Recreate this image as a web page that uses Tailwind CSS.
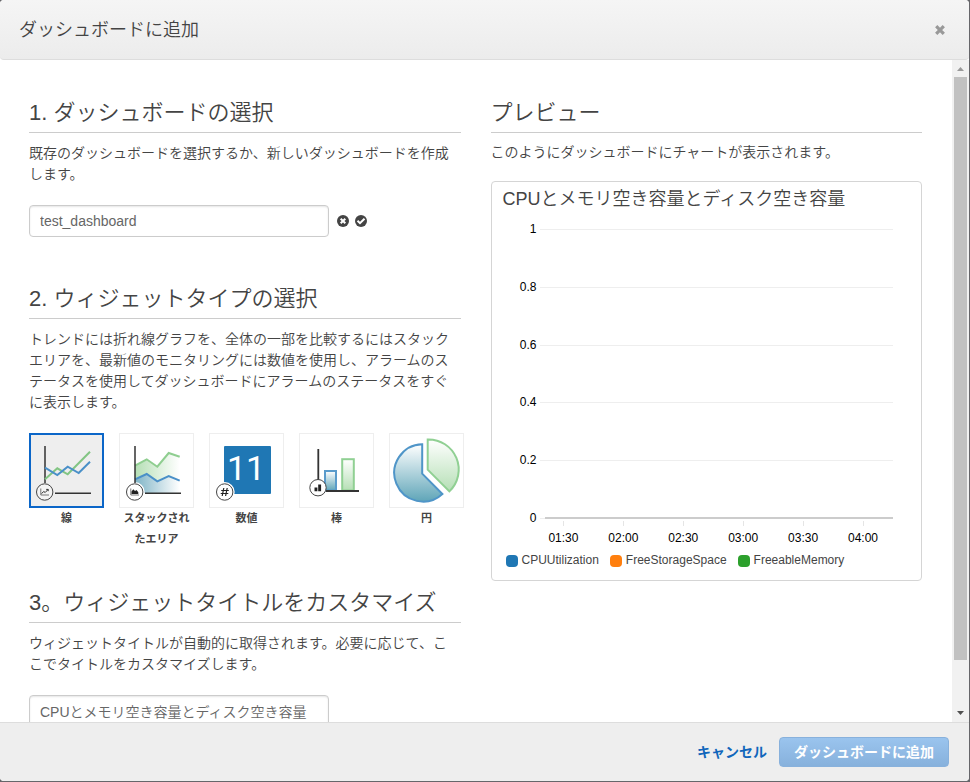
<!DOCTYPE html>
<html lang="ja">
<head>
<meta charset="utf-8">
<title>ダッシュボードに追加</title>
<script src="https://cdn.jsdelivr.net/npm/@tailwindcss/browser@4"></script>
</head>
<body class="bg-[#66666a] font-['Liberation_Sans','Noto_Sans_CJK_JP',sans-serif] text-[#444] text-[14px] leading-[21px] font-[350]">
<div class="h-screen pr-px pb-px">
<div role="dialog" aria-labelledby="dialog-title" class="flex h-full flex-col overflow-hidden rounded-[4px] bg-white">

  <header class="flex h-[60px] shrink-0 items-center justify-between rounded-b-[4px] border-b border-[#ddd] bg-linear-to-b from-[#f5f5f5] to-[#ececec] pl-[19px] pr-[24px]">
    <h1 id="dialog-title" class="text-[18px] leading-[24px] font-[350]">ダッシュボードに追加</h1>
    <button type="button" aria-label="閉じる" class="block">
      <svg class="block size-[10px]" viewBox="0 0 10 10"><path d="M1.2 1.2 8.8 8.8M8.8 1.2 1.2 8.8" stroke="#999" stroke-width="3.2" fill="none"/></svg>
    </button>
  </header>

  <div class="flex min-h-0 flex-1">
    <main class="grid min-w-0 flex-1 grid-cols-2 content-start gap-[30px] overflow-hidden pt-[37px] pr-[30px] pl-[29px]">
      <div class="min-w-0">
        <section>
          <h2 class="border-b border-[#ccc] pb-[3px] text-[22px] leading-[32px] font-[350]">1. ダッシュボードの選択</h2>
          <p class="mt-[10px]">既存のダッシュボードを選択するか、新しいダッシュボードを作成します。</p>
          <div class="mt-[20px] flex items-center">
            <input type="text" aria-label="ダッシュボード名" value="test_dashboard" class="h-[32px] w-[300px] rounded-[4px] border border-[#ccc] px-[10px] text-[#666] shadow-[inset_0_1px_2px_rgba(0,0,0,0.1)]">
            <button type="button" aria-label="取り消す" class="ml-[8px]">
              <svg class="block size-[12px]" viewBox="0 0 12 12"><circle cx="6" cy="6" r="6" fill="#444"/><path d="M3.7 3.7 8.3 8.3M8.3 3.7 3.7 8.3" stroke="#fff" stroke-width="2"/></svg>
            </button>
            <button type="button" aria-label="確定する" class="ml-[6px]">
              <svg class="block size-[12px]" viewBox="0 0 12 12"><circle cx="6" cy="6" r="6" fill="#444"/><path d="M2.5 5.8 5 8.2 9.5 3.8" stroke="#fff" stroke-width="2" fill="none"/></svg>
            </button>
          </div>
        </section>

        <section class="mt-[46px]">
          <h2 class="border-b border-[#ccc] pb-[3px] text-[22px] leading-[32px] font-[350]">2. ウィジェットタイプの選択</h2>
          <p class="mt-[10px]">トレンドには折れ線グラフを、全体の一部を比較するにはスタックエリアを、最新値のモニタリングには数値を使用し、アラームのステータスを使用してダッシュボードにアラームのステータスをすぐに表示します。</p>
          <div class="mt-[20px] flex gap-[15px] text-center text-[11px] font-bold">
            <label class="relative w-[75px] shrink-0">
              <input type="radio" name="widget" checked class="peer sr-only">
              <span class="block h-[75px] overflow-hidden border-2 border-[#0b66c8] bg-[#eee]">
                <svg class="block h-[71px] w-[71px]" viewBox="2 2 71 71" fill="none">
                  <path d="M16 13V50M26 60.3H62" stroke="#333" stroke-width="1.5"/>
                  <path d="M16 46.3 28.3 35.3 38.7 41.3 61 18.7" stroke="#82c583" stroke-width="2"/>
                  <path d="M16 34.7 28.3 42 38.7 33.7 49.7 40 61 28.7" stroke="#4a90c8" stroke-width="2"/>
                  <circle cx="15.7" cy="59" r="8.2" fill="#f4f4f4" stroke="#444" stroke-width="1"/>
                  <path d="M11.8 55.5V62H20" stroke="#555" stroke-width=".8"/>
                  <path d="M12.5 60.5 14.8 58.5 16.2 59.5 19 56.5M17.2 56.4H19.2V58.2" stroke="#333" stroke-width="1"/>
                </svg>
              </span>
              線
            </label>
            <label class="relative w-[75px] shrink-0">
              <input type="radio" name="widget" class="peer sr-only">
              <span class="block h-[75px] overflow-hidden border border-[#eee]">
                <svg class="block h-[73px] w-[73px]" viewBox="1 1 73 73" fill="none">
                  <defs>
                    <linearGradient id="area-green"><stop offset="0" stop-color="#b5dfb5"/><stop offset="1" stop-color="#fff"/></linearGradient>
                    <linearGradient id="area-blue"><stop offset="0" stop-color="#7fb4c6"/><stop offset="1" stop-color="#fff"/></linearGradient>
                  </defs>
                  <path d="M16 32.7 27.7 26.3 38.3 33.7 49.7 20 60.7 23.7V60H16Z" fill="url(#area-green)"/>
                  <path d="M16 46.3 27.7 41 38.3 48.3 49.7 43 60.7 47.7V60H16Z" fill="url(#area-blue)"/>
                  <path d="M16 32.7 27.7 26.3 38.3 33.7 49.7 20 60.7 23.7" stroke="#8fce90" stroke-width="2"/>
                  <path d="M16 46.3 27.7 41 38.3 48.3 49.7 43 60.7 47.7" stroke="#4a90c8" stroke-width="2"/>
                  <circle cx="15.7" cy="59" r="10" fill="#fff"/>
                  <path d="M16 13V50M26 60.3H62" stroke="#333" stroke-width="1.5"/>
                  <circle cx="15.7" cy="59" r="8.2" fill="#fff" stroke="#444" stroke-width="1"/>
                  <path d="M11.8 55.5V62H20" stroke="#555" stroke-width=".8"/>
                  <path d="M12.5 61V58.5L14.3 56.3 16 58 17.5 57 19.3 59.3V61Z" fill="#222"/>
                </svg>
              </span>
              スタックされたエリア
            </label>
            <label class="relative w-[75px] shrink-0">
              <input type="radio" name="widget" class="peer sr-only">
              <span class="block h-[75px] overflow-hidden border border-[#eee]">
                <svg class="block h-[73px] w-[73px]" viewBox="1 1 73 73" fill="none">
                  <rect x="15" y="13" width="47" height="48" rx="1" fill="#1f77b4"/>
                  <text x="37" y="47" class="font-['Roboto',sans-serif] text-[34px] font-normal" text-anchor="middle" fill="#fff">11</text>
                  <circle cx="15.7" cy="59" r="10" fill="#fff"/>
                  <circle cx="15.7" cy="59" r="8.2" fill="#fff" stroke="#444" stroke-width="1"/>
                  <path d="M14.8 55 13.2 63M18.2 55 16.6 63M12.2 57.5H19.8M11.7 60.5H19.3" stroke="#222" stroke-width="1.2"/>
                </svg>
              </span>
              数値
            </label>
            <label class="relative w-[75px] shrink-0">
              <input type="radio" name="widget" class="peer sr-only">
              <span class="block h-[75px] overflow-hidden border border-[#eee]">
                <svg class="block h-[73px] w-[73px]" viewBox="1 1 73 73" fill="none">
                  <defs>
                    <linearGradient id="shade-blue" x1="0" y1="0" x2="0" y2="1"><stop offset="0" stop-color="#fff"/><stop offset="1" stop-color="#5fa5b8"/></linearGradient>
                    <linearGradient id="shade-green" x1="0" y1="0" x2="0" y2="1"><stop offset="0" stop-color="#fff"/><stop offset="1" stop-color="#b5dfb5"/></linearGradient>
                  </defs>
                  <rect x="26" y="38" width="11" height="19.5" fill="url(#shade-blue)" stroke="#5a9bcb" stroke-width="2"/>
                  <rect x="43.2" y="26.2" width="11.6" height="31.3" fill="url(#shade-green)" stroke="#90d093" stroke-width="2"/>
                  <path d="M19.3 16V47M27 58H60" stroke="#333" stroke-width="1.8"/>
                  <circle cx="19" cy="54.7" r="8.2" fill="#fff" stroke="#444" stroke-width="1"/>
                  <path d="M15.5 54.5H18.4V58.3H15.5ZM19.2 51.5H22.1V58.3H19.2Z" fill="#222"/>
                </svg>
              </span>
              棒
            </label>
            <label class="relative w-[75px] shrink-0">
              <input type="radio" name="widget" class="peer sr-only">
              <span class="block h-[75px] overflow-hidden border border-[#eee]">
                <svg class="block h-[73px] w-[73px]" viewBox="1 1 73 73" fill="none">
                  <path d="M33.2 11.2A28.7 28.7 0 1 0 53.4 61L33.2 40.7Z" fill="url(#shade-blue)" stroke="#4f95c8" stroke-width="2"/>
                  <path d="M38.7 6.4A30.2 30.2 0 0 1 60.4 58.4L38.7 36.7Z" fill="url(#shade-green)" stroke="#90d093" stroke-width="2"/>
                </svg>
              </span>
              円
            </label>
          </div>
        </section>

        <section class="mt-[37px]">
          <h2 class="border-b border-[#ccc] pb-[3px] text-[22px] leading-[32px] font-[350]">3。ウィジェットタイトルをカスタマイズ</h2>
          <p class="mt-[10px]">ウィジェットタイトルが自動的に取得されます。必要に応じて、ここでタイトルをカスタマイズします。</p>
          <input type="text" aria-label="ウィジェットタイトル" value="CPUとメモリ空き容量とディスク空き容量" class="mt-[20px] block h-[32px] w-[300px] rounded-[4px] border border-[#ccc] px-[10px] text-[#666] shadow-[inset_0_1px_2px_rgba(0,0,0,0.1)]">
        </section>
      </div>

      <section class="min-w-0">
        <h2 class="border-b border-[#ccc] pb-[3px] text-[22px] leading-[32px] font-[350]">プレビュー</h2>
        <p class="mt-[9px]">このようにダッシュボードにチャートが表示されます。</p>
        <div class="mt-[18px] h-[400px] rounded-[4px] border border-[#d5d5d5] pt-[4px] pr-[28px]">
          <h3 class="pl-[11px] text-[18px] leading-[26px] font-[350]">CPUとメモリ空き容量とディスク空き容量</h3>
          <div class="mt-[10px] flex h-[304px] flex-col justify-between pl-[14px] text-[12px] leading-[15px] text-black">
            <div class="flex h-[15px] items-center gap-[3px]"><span class="w-[31px] text-right">1</span><span class="h-px flex-1 bg-[#eee]"></span></div>
            <div class="flex h-[15px] items-center gap-[3px]"><span class="w-[31px] text-right">0.8</span><span class="h-px flex-1 bg-[#eee]"></span></div>
            <div class="flex h-[15px] items-center gap-[3px]"><span class="w-[31px] text-right">0.6</span><span class="h-px flex-1 bg-[#eee]"></span></div>
            <div class="flex h-[15px] items-center gap-[3px]"><span class="w-[31px] text-right">0.4</span><span class="h-px flex-1 bg-[#eee]"></span></div>
            <div class="flex h-[15px] items-center gap-[3px]"><span class="w-[31px] text-right">0.2</span><span class="h-px flex-1 bg-[#eee]"></span></div>
            <div class="flex h-[15px] items-center gap-[3px]"><span class="w-[31px] text-right">0</span><span class="flex flex-1 items-center"><span class="h-px w-[5px] bg-[#eee]"></span><span class="h-[2px] flex-1 bg-[#ccc]"></span></span></div>
          </div>
          <div class="-mt-[5px] ml-[42px] grid grid-cols-6 text-center text-[12px] leading-[15px] text-black">
            <div><span class="mx-auto mb-[5px] block h-[5px] w-px bg-[#e5e5e5]"></span>01:30</div>
            <div><span class="mx-auto mb-[5px] block h-[5px] w-px bg-[#e5e5e5]"></span>02:00</div>
            <div><span class="mx-auto mb-[5px] block h-[5px] w-px bg-[#e5e5e5]"></span>02:30</div>
            <div><span class="mx-auto mb-[5px] block h-[5px] w-px bg-[#e5e5e5]"></span>03:00</div>
            <div><span class="mx-auto mb-[5px] block h-[5px] w-px bg-[#e5e5e5]"></span>03:30</div>
            <div><span class="mx-auto mb-[5px] block h-[5px] w-px bg-[#e5e5e5]"></span>04:00</div>
          </div>
          <ul class="mt-[7px] flex gap-[11px] pl-[14px] text-[12px] leading-[15px]">
            <li class="flex items-center gap-[4px]"><span class="size-[12px] rounded-[4px] bg-[#1f77b4]"></span>CPUUtilization</li>
            <li class="flex items-center gap-[4px]"><span class="size-[12px] rounded-[4px] bg-[#ff7f0e]"></span>FreeStorageSpace</li>
            <li class="flex items-center gap-[4px]"><span class="size-[12px] rounded-[4px] bg-[#2ca02c]"></span>FreeableMemory</li>
          </ul>
        </div>
      </section>
    </main>

    <div aria-hidden="true" class="flex w-[17px] shrink-0 flex-col items-center bg-[#f1f1f1]">
      <svg class="h-[17px] w-[17px] shrink-0" viewBox="0 0 17 17"><path d="M5 11 8.5 7 12 11Z" fill="#999"/></svg>
      <span class="h-[88%] w-[13px] bg-[#c1c1c1]"></span>
      <svg class="mt-auto h-[17px] w-[17px] shrink-0" viewBox="0 0 17 17"><path d="M5 6 8.5 10 12 6Z" fill="#505050"/></svg>
    </div>
  </div>

  <footer class="flex h-[59px] shrink-0 items-center justify-end gap-[12px] border-t border-[#ddd] bg-[#eee] pr-[20px]">
    <a href="#" class="font-bold text-[#1166bb]">キャンセル</a>
    <button type="submit" class="h-[30px] rounded-[4px] border border-[#88b1dc] bg-linear-to-b from-[#9ac4ee] to-[#87b1dc] px-[14px] font-bold text-white">ダッシュボードに追加</button>
  </footer>
</div>
</div>
</body>
</html>
